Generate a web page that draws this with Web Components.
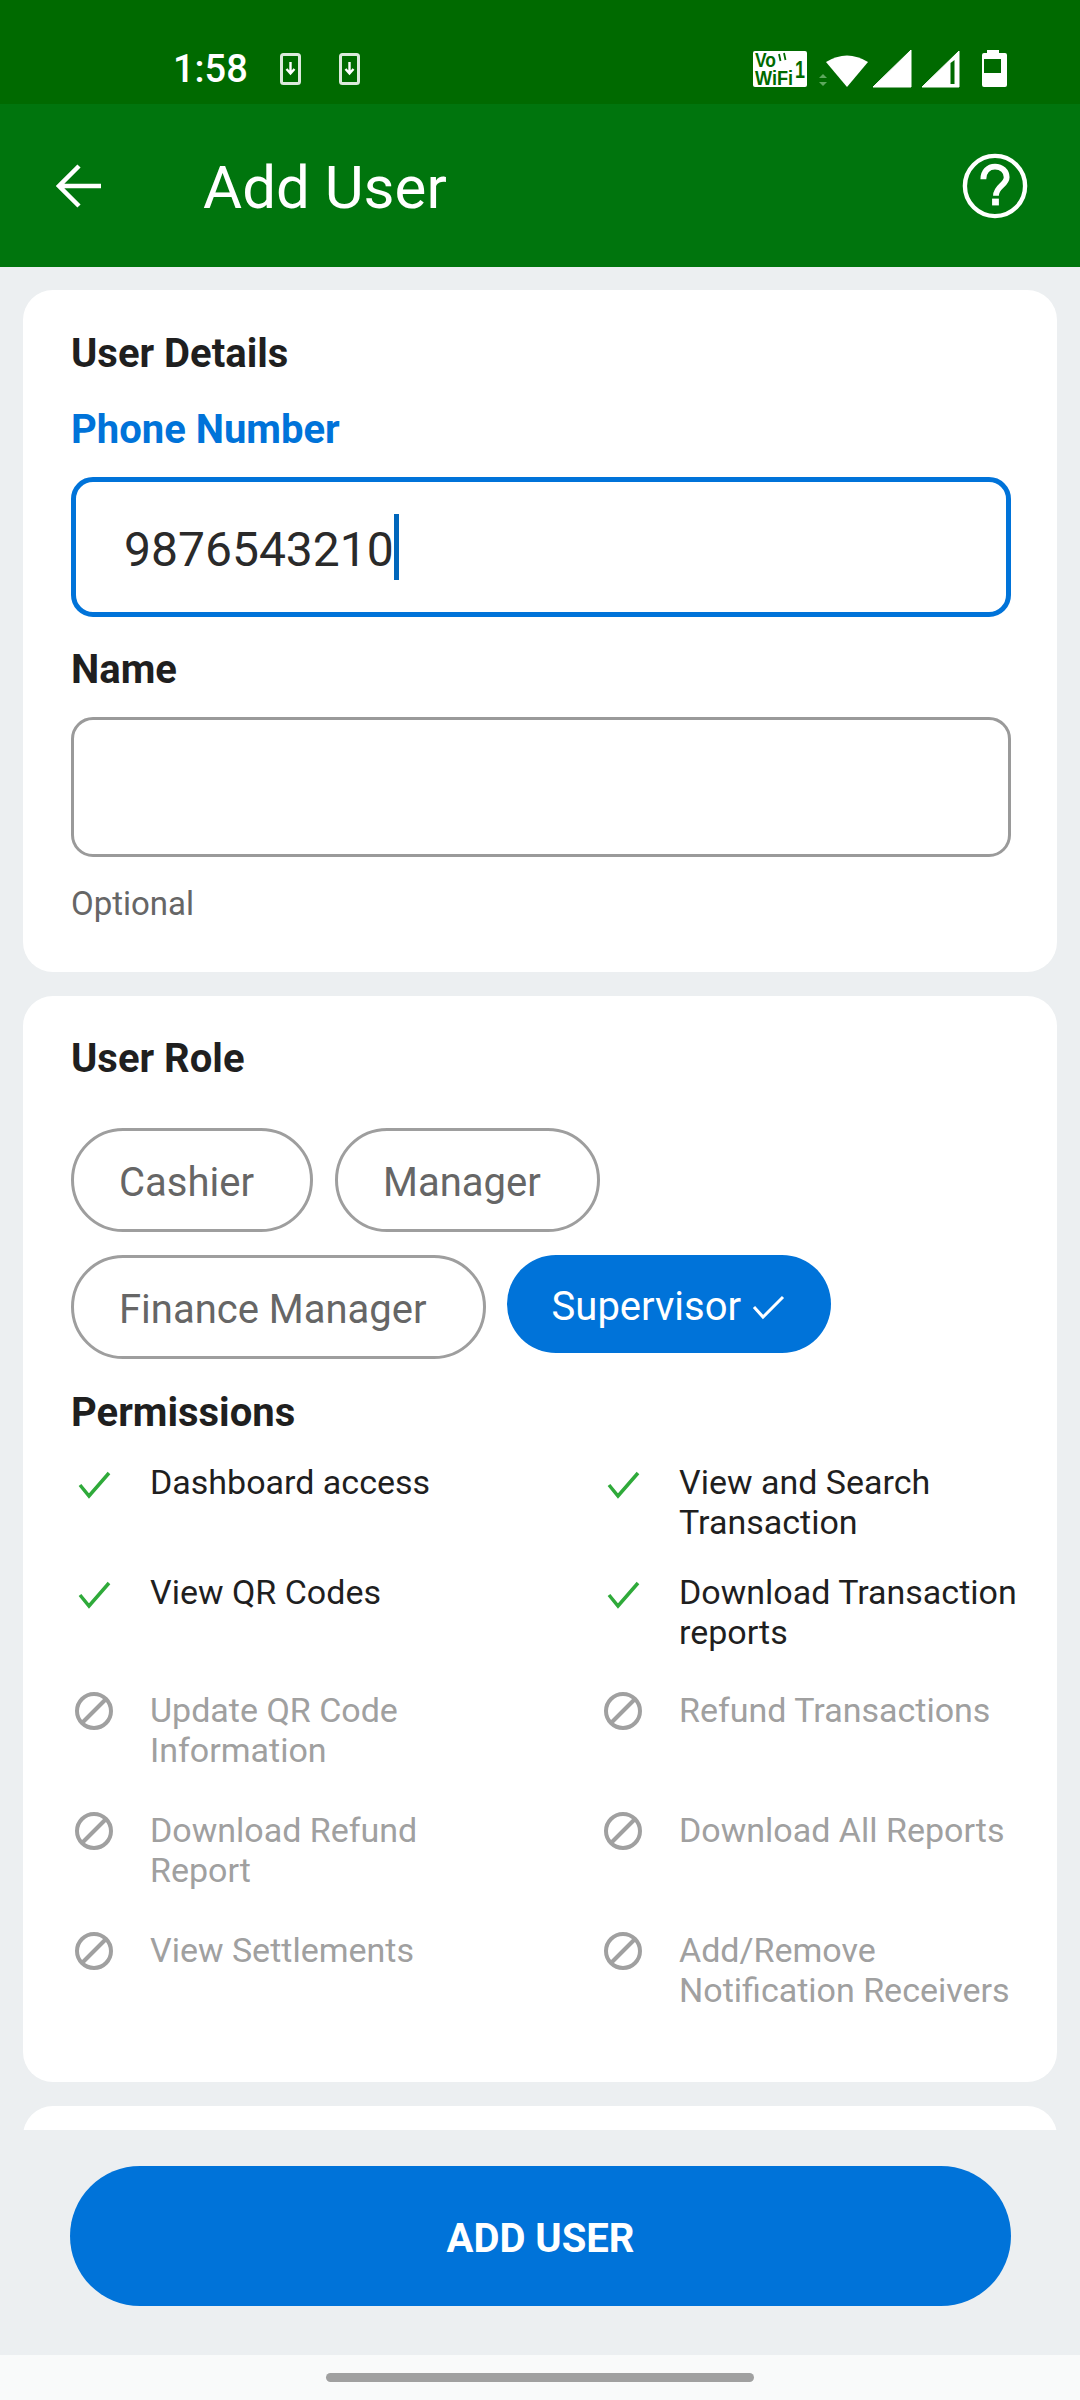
<!DOCTYPE html>
<html><head><meta charset="utf-8"><style>
html,body{margin:0;padding:0}
body{width:1080px;height:2400px;overflow:hidden;background:#eceff1;font-family:Roboto,sans-serif}
add-user-screen{display:block}
</style></head><body>
<add-user-screen></add-user-screen>
<script>
const def=(name,html)=>customElements.define(name,class extends HTMLElement{connectedCallback(){if(this.shadowRoot)return;const r=this.attachShadow({mode:'open'});r.innerHTML=typeof html==='function'?html(this):html;}});
const dl=`<svg width="21" height="32" viewBox="0 0 21 32"><rect x="1.500" y="1.500" width="18" height="29" rx="2" fill="none" stroke="#dceadc" stroke-width="3"/><path d="M10.500 9v11M6.500 16l4 4.500 4-4.500" fill="none" stroke="#fff" stroke-width="2.400"/></svg>`;
def('status-bar',`<style>
:host{display:flex;height:104px;background:#006a00;color:#fff;box-sizing:border-box;align-items:flex-start}
.t{font:500 38px/1 Roboto,sans-serif;margin-left:173px;width:107px;margin-top:50px}
svg{display:block}
.l{display:flex;gap:38px;margin-top:53px}
.r{margin-left:auto;margin-top:49px;margin-right:67px}
</style>
<div class="t">1:58</div>
<div class="l">${dl}${dl}</div>
<div class="r">
<svg width="260" height="40" viewBox="0 0 260 40">
<rect x="0" y="2" width="54" height="36" rx="2" fill="#fff"/>
<text x="2" y="18" font-family="Liberation Sans" font-weight="700" font-size="20" textLength="21" lengthAdjust="spacingAndGlyphs" fill="#006a00">Vo</text>
<text x="2" y="36" font-family="Liberation Sans" font-weight="700" font-size="20" textLength="38" lengthAdjust="spacingAndGlyphs" fill="#006a00">WiFi</text>
<text x="42" y="29" font-family="Liberation Sans" font-weight="700" font-size="24" textLength="10" lengthAdjust="spacingAndGlyphs" fill="#006a00">1</text>
<path d="M26 5l1.500 7M31 4l1.500 7" stroke="#006a00" stroke-width="1.800"/>
<path d="M73 13Q94 0 115 13L94 38Z" fill="#fff"/>
<path d="M66 29l4-4 4 4zM66 33l4 4 4-4z" fill="#5ea85e"/>
<path d="M120 38L158 1V38Z" fill="#fff" stroke="#fff" stroke-linejoin="round" stroke-width="1"/>
<path d="M169 38L206 2V38Z" fill="#fff" stroke="#fff" stroke-linejoin="round" stroke-width="1"/>
<path d="M197.500 14V35H201.500V11Z" fill="#006a00"/>
<path d="M228 4h6V1h12v3h6q2 0 2 2v30q0 2-2 2h-21q-2 0-2-2V6q0-2 2-2z" fill="#fff"/>
<rect x="231" y="10" width="17" height="14" fill="#006a00"/>
</svg></div>`);
def('app-bar',`<style>
:host{display:flex;align-items:center;height:163px;background:#00750d;color:#fff;box-sizing:border-box;padding-left:56px;padding-right:52px}
svg{display:block}
h1{font:400 60px/1 Roboto,sans-serif;margin:4px 0 0 101px;flex:1}
</style>
<svg width="46" height="46" viewBox="0 0 46 46"><path d="M45 23H4M23 3L3 23L23 43" fill="none" stroke="#fff" stroke-width="4.500"/></svg>
<h1><slot></slot></h1>
<svg width="66" height="66" viewBox="0 0 68 68"><circle cx="34" cy="34" r="31" fill="none" stroke="#fff" stroke-width="4.500"/><path d="M22 27c0-8 5-13 12-13s12 5 12 11c0 8-11 9-11 19" fill="none" stroke="#fff" stroke-width="6"/><rect x="31" y="47" width="7" height="7" fill="#fff"/></svg>`);
def('white-card',`<style>:host{display:block;flex:none;background:#fff;border-radius:30px;margin:0 23px;box-sizing:border-box;padding:0 46px 0 48px}</style><slot></slot>`);
def('text-field',(el)=>`<style>
:host{display:block}
.l{font:700 40px/44px Roboto,sans-serif;color:${el.hasAttribute('focused')?'#0073d9':'#1f1f1f'};height:44px;padding-top:2px;margin-bottom:-2px}
.b{margin-top:27px;height:140px;box-sizing:border-box;border-radius:22px;border:${el.hasAttribute('focused')?'5px solid #0073d9':'3px solid #9a9a9a'};display:flex;align-items:center;padding-left:${el.hasAttribute('focused')?'48px':'50px'};font:400 48px/1 Roboto,sans-serif;color:#2a2a2a}
.b span{padding-top:6px}
.c{width:5px;height:66px;background:#0066bb}
</style><div class="l">${el.getAttribute('label')}</div><div class="b"><span>${el.getAttribute('value')||''}</span>${el.hasAttribute('focused')?'<i class="c"></i>':''}</div>`);
def('role-chip',(el)=>{const on=el.hasAttribute('selected');return `<style>
:host{display:block}
.c{box-sizing:border-box;display:flex;align-items:center;border-radius:60px;height:${on?'98px':'104px'};
font:400 40px/1 Roboto,sans-serif;white-space:nowrap;padding-top:5px;
${on?'background:#0073d9;color:#fff;padding-left:45px;padding-right:44px;gap:10px':'border:3px solid #9e9e9e;color:#666;padding-left:45px;padding-right:56px'}}
svg{display:block}
</style><div class="c"><slot></slot>${on?'<svg width="36" height="30" viewBox="0 0 36 30"><path d="M3 15L12 25L32 5" fill="none" stroke="#fff" stroke-width="3"/></svg>':''}</div>`});
def('perm-item',(el)=>{const on=el.hasAttribute('on');return `<style>
:host{display:flex;align-items:flex-start;height:var(--h,110px)}
.i{width:79px;flex:none;display:flex;padding-left:3px;box-sizing:border-box}
svg{display:block}
.t{font:400 34px/40px Roboto,sans-serif;color:${on?'#1f1f1f':'#a0a0a0'};white-space:nowrap}
</style><div class="i">${on?'<svg width="40" height="40" viewBox="0 0 40 40" style="margin-top:3px"><path d="M6 20L15 31L35 8" fill="none" stroke="#2faa3a" stroke-width="3.500"/></svg>':'<svg width="40" height="40" viewBox="0 0 40 40" style="margin-top:1px"><circle cx="20" cy="20" r="17" fill="none" stroke="#a0a0a0" stroke-width="4"/><path d="M8 32L32 8" stroke="#a0a0a0" stroke-width="4"/></svg>'}</div><div class="t"><slot></slot></div>`});
def('add-user-screen',`<style>
:host{display:flex;flex-direction:column;height:2400px;color:#1f1f1f;font-family:Roboto,sans-serif}
main{flex:none;overflow:hidden;padding-top:23px;box-sizing:border-box;display:flex;flex-direction:column;gap:24px;height:1863px}
h2{font:700 40px/44px Roboto,sans-serif;color:#1f1f1f;margin:0;padding-top:2px;margin-bottom:-2px}
.c1{height:682px;padding-top:40px}
.opt{font:400 33px/40px Roboto,sans-serif;color:#666;margin-top:27px}
.c2{height:1086px;padding-top:39px}
.chips{margin-top:49px;display:flex;flex-direction:column;gap:23px}
.row{display:flex;gap:22px;align-items:flex-start}
.row role-chip[selected]{margin-left:-1px}
.grid{display:grid;grid-template-columns:529px 1fr;width:960px;margin-top:29px}
.c3{height:60px}
footer{height:225px;flex:none;background:#eceff1;padding:36px 69px 0 70px;box-sizing:border-box}
button{display:block;width:100%;height:140px;border:0;border-radius:70px;background:#0073d9;color:#fff;font:700 40px/1 Roboto,sans-serif;padding:6px 0 0}
nav{height:45px;flex:none;background:#f9fafa;display:flex;justify-content:center;padding-top:18px;box-sizing:border-box}
nav i{display:block;width:428px;height:9px;border-radius:5px;background:#a0a0a0}
</style>
<status-bar></status-bar>
<app-bar>Add User</app-bar>
<main>
<white-card class="c1">
<h2>User Details</h2>
<div style="height:32px"></div>
<text-field label="Phone Number" value="9876543210" focused></text-field>
<div style="height:29px"></div>
<text-field label="Name"></text-field>
<div class="opt">Optional</div>
</white-card>
<white-card class="c2">
<h2>User Role</h2>
<div class="chips">
<div class="row"><role-chip>Cashier</role-chip><role-chip>Manager</role-chip></div>
<div class="row"><role-chip>Finance Manager</role-chip><role-chip selected>Supervisor</role-chip></div>
</div>
<h2 style="margin-top:30px">Permissions</h2>
<div class="grid">
<perm-item on style="--h:110px">Dashboard access</perm-item><perm-item on>View and Search<br>Transaction</perm-item>
<perm-item on style="--h:118px">View QR Codes</perm-item><perm-item on style="--h:118px">Download Transaction<br>reports</perm-item>
<perm-item style="--h:120px">Update QR Code<br>Information</perm-item><perm-item style="--h:120px">Refund Transactions</perm-item>
<perm-item style="--h:120px">Download Refund<br>Report</perm-item><perm-item style="--h:120px">Download All Reports</perm-item>
<perm-item style="--h:120px">View Settlements</perm-item><perm-item style="--h:120px">Add/Remove<br>Notification Receivers</perm-item>
</div>
</white-card>
<white-card class="c3"></white-card>
</main>
<footer><button>ADD USER</button></footer>
<nav><i></i></nav>`);
</script></body></html>
